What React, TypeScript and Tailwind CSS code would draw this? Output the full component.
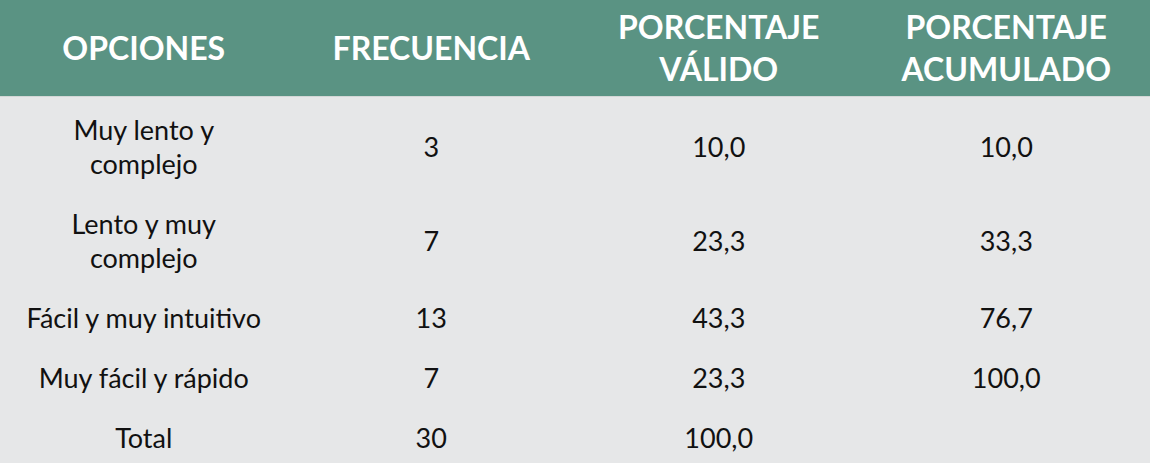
import React from "react";

const rows = [
  { label: ["Muy lento y", "complejo"], freq: "3", valid: "10,0", acc: "10,0" },
  { label: ["Lento y muy", "complejo"], freq: "7", valid: "23,3", acc: "33,3" },
  { label: ["Fácil y muy intuitivo"], freq: "13", valid: "43,3", acc: "76,7" },
  { label: ["Muy fácil y rápido"], freq: "7", valid: "23,3", acc: "100,0" },
  { label: ["Total"], freq: "30", valid: "100,0", acc: "" },
];

const App = () => {
  return (
    <div
      className="w-[1150px] h-[463px] bg-[#e6e7e8] text-[#111111] overflow-hidden"
      style={{ fontFamily: "Lato, 'Open Sans', sans-serif" }}
    >
      {/* ===== HEADER ===== */}
      <div className="h-[97px] bg-[#5a9383] border-b border-[#d3d7d6] grid grid-cols-4 items-center text-white font-bold text-[32px] leading-[42px] text-center">
        <div>OPCIONES</div>
        <div>FRECUENCIA</div>
        <div>
          PORCENTAJE
          <br />
          VÁLIDO
        </div>
        <div>
          PORCENTAJE
          <br />
          ACUMULADO
        </div>
      </div>
      {/* ===== HEADER END ===== */}

      {/* ===== BODY ===== */}
      <div className="pt-[3px] text-[27px] leading-[34px]">
        {rows.map((r, i) => (
          <div
            key={i}
            className="grid grid-cols-4 items-center text-center py-[13px]"
          >
            <div>
              {r.label.map((l, j) => (
                <div key={j}>{l}</div>
              ))}
            </div>
            <div>{r.freq}</div>
            <div>{r.valid}</div>
            <div>{r.acc}</div>
          </div>
        ))}
      </div>
      {/* ===== BODY END ===== */}
    </div>
  );
};

export default App;
